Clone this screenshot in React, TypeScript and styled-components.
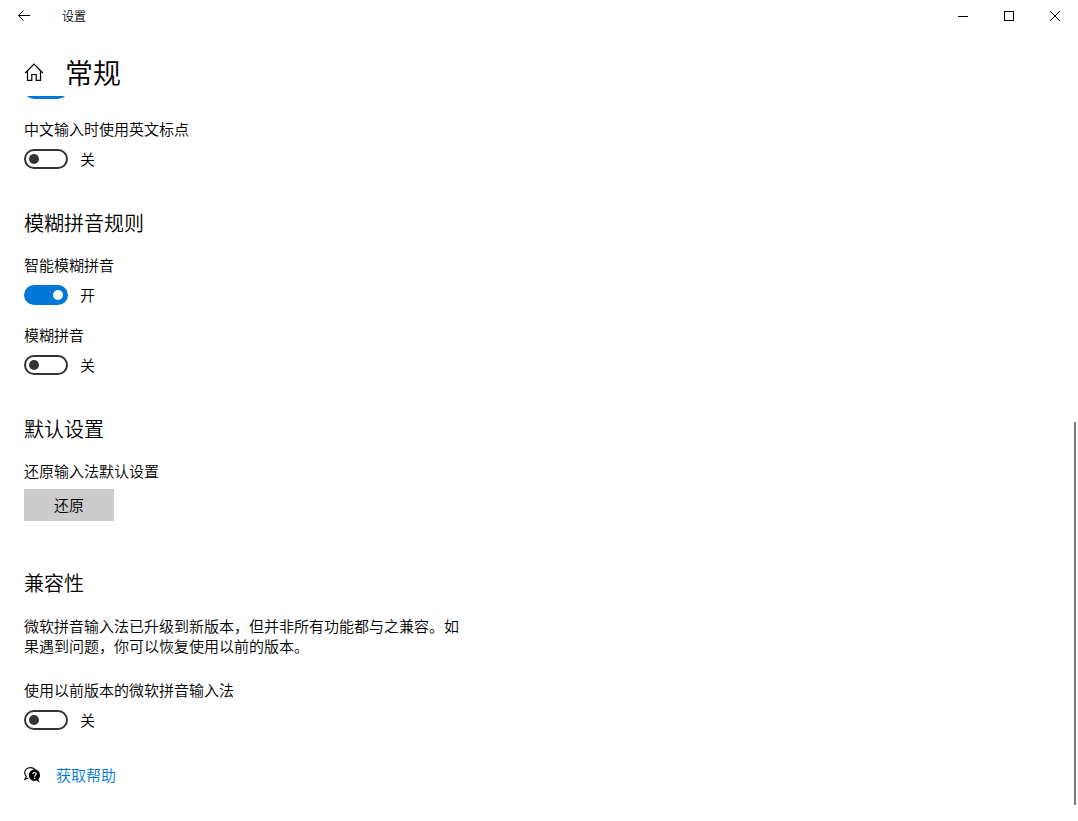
import React, { useId, useState } from "react";
import styled, { createGlobalStyle } from "styled-components";

const GlobalStyle = createGlobalStyle`
  *, *::before, *::after { box-sizing: border-box; }
  body {
    margin: 0;
    background: #fff;
    color: #000;
    font-family: "Noto Sans CJK SC", "Noto Sans", sans-serif;
    font-size: 15px;
    font-weight: 350;
    line-height: 20px;
  }
  button, input { font: inherit; color: inherit; margin: 0; }
`;

const Window = styled.div`
  display: flex;
  flex-direction: column;
  height: 100vh;
`;

const TitleBar = styled.header`
  display: flex;
  align-items: stretch;
  flex: none;
  height: 32px;
`;

const BarButton = styled.button<{ $width: number }>`
  display: flex;
  align-items: center;
  justify-content: center;
  width: ${(p) => p.$width}px;
  padding: 0;
  border: 0;
  background: transparent;
`;

const AppName = styled.span`
  flex: 1;
  padding-left: 14px;
  font-size: 12px;
  line-height: 32px;
`;

const PageHeader = styled.div`
  display: flex;
  align-items: center;
  gap: 21px;
  flex: none;
  height: 64px;
  padding: 16px 24px 0;
`;

const HomeLink = styled.a`
  display: flex;
  color: inherit;
`;

const PageTitle = styled.h1`
  margin: 0;
  font-size: 28px;
  font-weight: inherit;
  line-height: 40px;
`;

const Viewport = styled.main`
  position: relative;
  flex: 1;
  min-height: 0;
  overflow: hidden;
`;

const ScrolledContent = styled.div`
  display: flex;
  flex-direction: column;
  gap: 40px;
  margin-top: -17px;
  padding: 0 24px;
`;

const ScrollThumb = styled.div`
  position: absolute;
  top: 45%;
  right: 2px;
  bottom: 16px;
  width: 2px;
  background: #7a7a7a;
`;

const Section = styled.section<{ $gap?: number; $spaceBefore?: number }>`
  display: flex;
  flex-direction: column;
  align-items: flex-start;
  gap: ${(p) => p.$gap ?? 20}px;
  margin-top: ${(p) => p.$spaceBefore ?? 0}px;
`;

const SectionTitle = styled.h2`
  margin: 0;
  font-size: 20px;
  font-weight: inherit;
  line-height: 28px;
`;

const Field = styled.div<{ $gap: number }>`
  display: flex;
  flex-direction: column;
  align-items: flex-start;
  gap: ${(p) => p.$gap}px;
`;

const ToggleRow = styled.div`
  display: flex;
  align-items: center;
  gap: 12px;
  height: 20px;
`;

const Switch = styled.input`
  appearance: none;
  display: flex;
  align-items: center;
  width: 44px;
  height: 20px;
  padding: 0 3px;
  border: 2px solid #333;
  border-radius: 10px;
  background: #fff;
  &::before {
    content: "";
    width: 10px;
    height: 10px;
    border-radius: 50%;
    background: #333;
  }
  &:checked {
    justify-content: flex-end;
    border-color: #0078d7;
    background: #0078d7;
  }
  &:checked::before { background: #fff; }
`;

const ResetButton = styled.button`
  width: 90px;
  height: 32px;
  padding: 0;
  border: 0;
  background: #ccc;
`;

const Paragraph = styled.p`
  max-width: 440px;
  margin: 0;
`;

const HelpRow = styled.div`
  display: flex;
  align-items: center;
  gap: 16px;
`;

const HelpLink = styled.a`
  color: #0078d7;
  text-decoration: none;
`;

function Toggle({ label, on = false }: { label?: string; on?: boolean }) {
  const id = useId();
  const [checked, setChecked] = useState(on);
  return (
    <Field $gap={10}>
      {label && <label htmlFor={id}>{label}</label>}
      <ToggleRow>
        <Switch
          id={id}
          type="checkbox"
          role="switch"
          aria-label={label ? undefined : "开关"}
          checked={checked}
          onChange={(e) => setChecked(e.target.checked)}
        />
        {label && <span>{checked ? "开" : "关"}</span>}
      </ToggleRow>
    </Field>
  );
}

const BackIcon = () => (
  <svg width="14" height="12" viewBox="0 0 14 12" fill="none" stroke="#000" aria-hidden="true">
    <path d="M1.5 5.5H13M6.5 .5L1.5 5.5L6.5 10.5" />
  </svg>
);

const HomeIcon = () => (
  <svg width="20" height="20" viewBox="0 0 20 20" fill="none" stroke="#000" strokeWidth="1.2" aria-hidden="true">
    <path d="M1.2 11L10 2.2L18.8 11M3.5 9V18.4H7.8V12.5H12.2V18.4H16.5V9" />
  </svg>
);

const MinimizeIcon = () => (
  <svg width="10" height="10" viewBox="0 0 10 10" stroke="#000" aria-hidden="true">
    <path d="M0 5.5H10" />
  </svg>
);

const MaximizeIcon = () => (
  <svg width="10" height="10" viewBox="0 0 10 10" fill="none" stroke="#000" aria-hidden="true">
    <rect x=".5" y=".5" width="9" height="9" />
  </svg>
);

const CloseIcon = () => (
  <svg width="10" height="10" viewBox="0 0 10 10" stroke="#000" aria-hidden="true">
    <path d="M0 0L10 10M10 0L0 10" />
  </svg>
);

const HelpIcon = () => (
  <svg width="16" height="16" viewBox="0 0 16 16" fill="none" aria-hidden="true">
    <path
      d="M11.3 3.4C10.4 1.6 8.5 .6 6.3 .6C3.2 .6 .7 2.9 .7 5.8C.7 7.3 1.3 8.6 2.3 9.5L.9 12.3L4.2 10.9"
      stroke="#000"
      strokeWidth="1.1"
    />
    <path
      d="M10.5 2.6C13.6 2.6 16 5.1 16 8.2C16 9.8 15.4 11.3 14.3 12.3L15.8 15.4L12.2 13.6C11.7 13.8 11.1 13.9 10.5 13.9C7.3 13.9 4.9 11.3 4.9 8.2C4.9 5.1 7.3 2.6 10.5 2.6Z"
      fill="#000"
    />
    <path d="M8.8 7C8.8 5 12.2 5 12.2 7C12.2 8.2 10.5 8.1 10.5 9.7" stroke="#fff" strokeWidth="1.2" />
    <rect x="9.9" y="10.7" width="1.3" height="1.3" fill="#fff" />
  </svg>
);

export default function App() {
  return (
    <Window>
      <GlobalStyle />
      <TitleBar>
        <BarButton $width={48} aria-label="返回"><BackIcon /></BarButton>
        <AppName>设置</AppName>
        <BarButton $width={46} aria-label="最小化"><MinimizeIcon /></BarButton>
        <BarButton $width={46} aria-label="最大化"><MaximizeIcon /></BarButton>
        <BarButton $width={46} aria-label="关闭"><CloseIcon /></BarButton>
      </TitleBar>
      <PageHeader>
        <HomeLink href="#" aria-label="主页"><HomeIcon /></HomeLink>
        <PageTitle>常规</PageTitle>
      </PageHeader>
      <Viewport>
        <ScrolledContent>
          <Section>
            <Toggle on />
            <Toggle label="中文输入时使用英文标点" />
          </Section>
          <Section $gap={18}>
            <SectionTitle>模糊拼音规则</SectionTitle>
            <Section>
              <Toggle label="智能模糊拼音" on />
              <Toggle label="模糊拼音" />
            </Section>
          </Section>
          <Section $gap={18}>
            <SectionTitle>默认设置</SectionTitle>
            <Field $gap={8}>
              <span id="reset-label">还原输入法默认设置</span>
              <ResetButton aria-describedby="reset-label">还原</ResetButton>
            </Field>
          </Section>
          <Section $gap={35} $spaceBefore={8}>
            <Section $gap={19}>
              <SectionTitle>兼容性</SectionTitle>
              <Section $gap={24}>
                <Paragraph>
                  微软拼音输入法已升级到新版本，但并非所有功能都与之兼容。如果遇到问题，你可以恢复使用以前的版本。
                </Paragraph>
                <Toggle label="使用以前版本的微软拼音输入法" />
              </Section>
            </Section>
            <HelpRow>
              <HelpIcon />
              <HelpLink href="#">获取帮助</HelpLink>
            </HelpRow>
          </Section>
        </ScrolledContent>
        <ScrollThumb />
      </Viewport>
    </Window>
  );
}
